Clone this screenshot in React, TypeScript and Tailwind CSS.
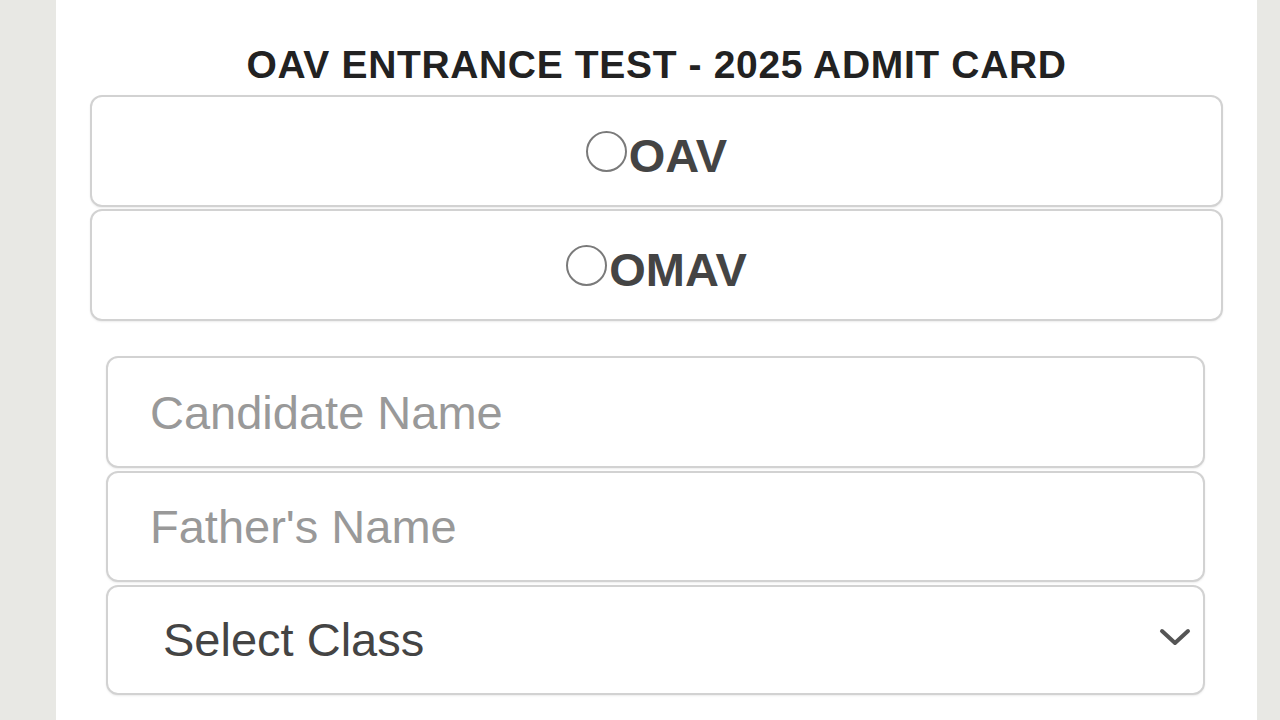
import React, { useState } from 'react';

const boxCls =
  'rounded-[12px] border-2 border-[#d2d2d2] bg-white shadow-[0_1px_2px_rgba(0,0,0,0.08)]';

function RadioBox({ label, checked, onPick }: { label: string; checked: boolean; onPick: () => void }) {
  return (
    <label className={`${boxCls} h-[112px] flex justify-center pt-[35px] cursor-pointer`}>
      <span className="flex items-end gap-[2px] h-[47px]">
        <input type="radio" name="school" checked={checked} onChange={onPick} className="sr-only" />
        <span className="mb-[7px] w-[41px] h-[41px] rounded-full border-2 border-[#7a7a7a] bg-white flex items-center justify-center">
          {checked && <span className="w-[22px] h-[22px] rounded-full bg-[#444]" />}
        </span>
        <span className="text-[47px] leading-none font-bold text-[#444]">{label}</span>
      </span>
    </label>
  );
}

export default function App() {
  const [school, setSchool] = useState('');

  return (
    <div
      className="flex h-[720px] w-[1280px] overflow-hidden bg-[#e8e8e4]"
      style={{ fontFamily: '"Liberation Sans", Arial, sans-serif' }}
    >
      <div className="w-[56px] shrink-0" />
      <div className="w-[1201px] shrink-0 bg-white pt-[43px]">
        <h1 className="text-center text-[39px] leading-[44px] font-bold tracking-[0.65px] text-[#222]">
          OAV ENTRANCE TEST - 2025 ADMIT CARD
        </h1>

        <div className="mt-[8px] mx-[34px] flex flex-col gap-[2px]">
          <RadioBox label="OAV" checked={school === 'OAV'} onPick={() => setSchool('OAV')} />
          <RadioBox label="OMAV" checked={school === 'OMAV'} onPick={() => setSchool('OMAV')} />
        </div>

        <div className="mt-[35px] ml-[50px] mr-[52px] flex flex-col gap-[3px]">
          <input
            type="text"
            placeholder="Candidate Name"
            className={`${boxCls} h-[112px] w-full pl-[42px] pr-4 text-[47px] text-[#444] placeholder:text-[#999] outline-none`}
          />
          <input
            type="text"
            placeholder="Father's Name"
            className={`${boxCls} h-[111px] w-full pl-[42px] pr-4 text-[47px] text-[#444] placeholder:text-[#999] outline-none`}
          />
          <div className="relative">
            <select
              defaultValue=""
              className={`${boxCls} h-[110px] w-full appearance-none pl-[55px] pr-16 text-[47px] text-[#444] outline-none`}
            >
              <option value="">Select Class</option>
              <option value="6">Class VI</option>
              <option value="7">Class VII</option>
              <option value="8">Class VIII</option>
            </select>
            <svg
              className="pointer-events-none absolute right-[14px] top-1/2 -translate-y-1/2 -mt-[3px]"
              width="32"
              height="20"
              viewBox="0 0 32 20"
              fill="none"
            >
              <path d="M3 4 L16 16 L29 4" stroke="#555" strokeWidth="4" strokeLinecap="round" strokeLinejoin="round" />
            </svg>
          </div>
        </div>
      </div>
      <div className="flex-1" />
    </div>
  );
}
